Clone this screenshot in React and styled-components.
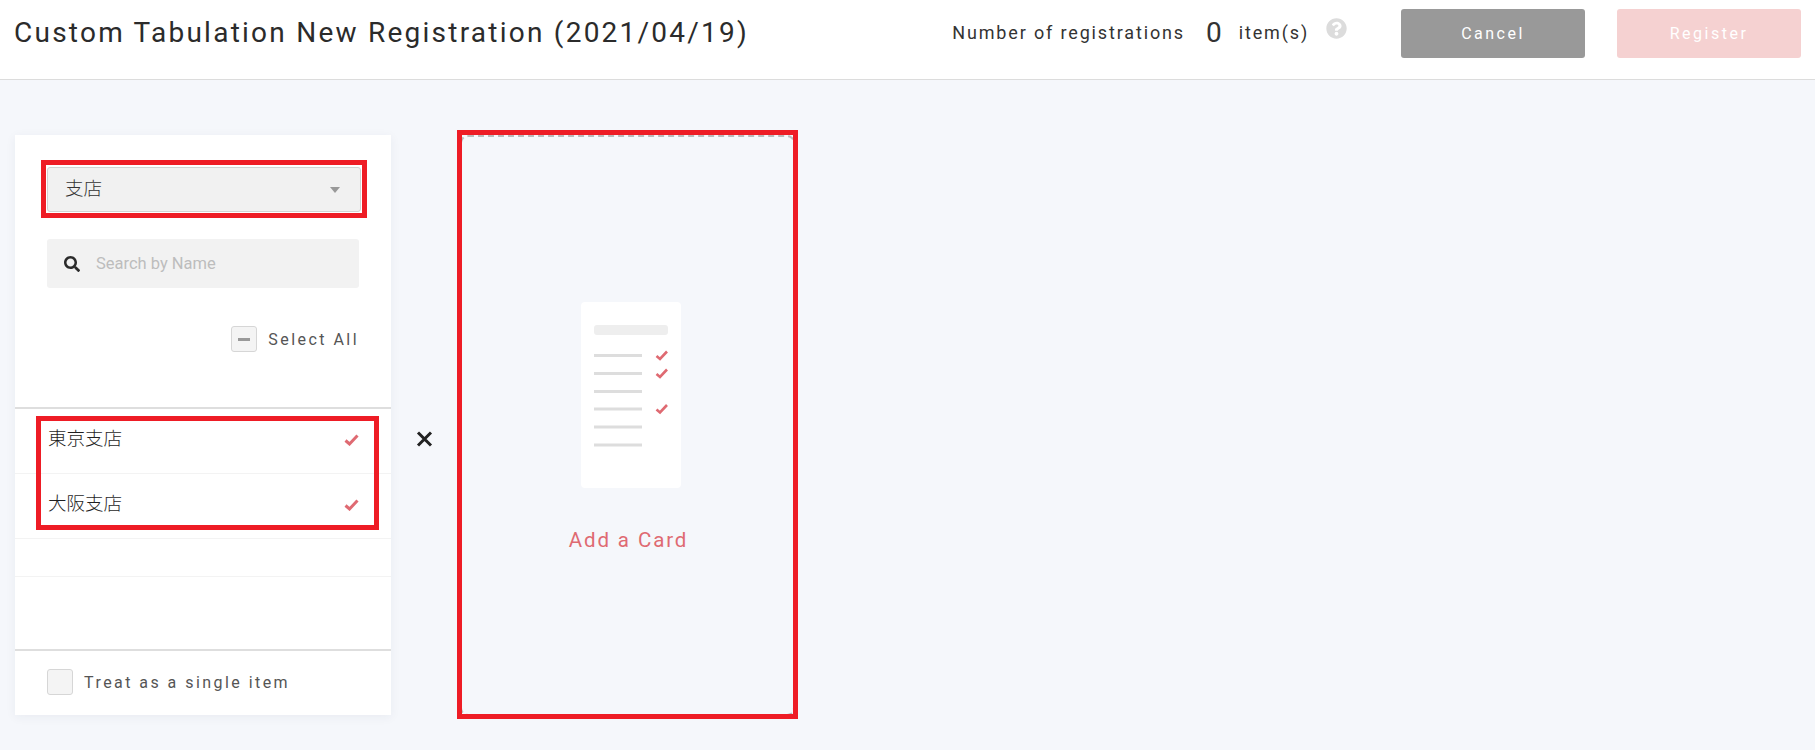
import React from 'react';
import styled, { createGlobalStyle } from 'styled-components';
import { FaSearch, FaQuestionCircle } from 'react-icons/fa';

const GlobalStyle = createGlobalStyle`
  html, body {
    margin: 0;
    padding: 0;
    background: #f5f7fb;
    font-family: Roboto, "Noto Sans CJK JP", sans-serif;
    color: #333;
  }
  * { box-sizing: border-box; }
`;

const Page = styled.div`
  width: 1815px;
  height: 750px;
  overflow: hidden;
`;

const Header = styled.header`
  height: 80px;
  padding: 9px 14px 21px;
  background: #fff;
  border-bottom: 1px solid #dcdcdc;
  display: flex;
  align-items: center;
`;

const Title = styled.h1`
  margin: -2px 0 0;
  flex: 1;
  font-size: 28px;
  font-weight: 400;
  letter-spacing: 2.24px;
  color: #2b2b2b;
  white-space: nowrap;
`;

const Count = styled.div`
  display: flex;
  align-items: center;
  margin-top: -2px;
  font-size: 18px;
  letter-spacing: 1.85px;
  color: #333;
`;

const CountNumber = styled.span`
  font-size: 28px;
  letter-spacing: 0;
  margin: 0 17px 0 21px;
`;

const HelpIcon = styled(FaQuestionCircle)`
  width: 21px;
  height: 21px;
  margin: -10px 54px 0 17px;
  color: #dcdcdc;
`;

const Button = styled.button`
  width: 184px;
  height: 49px;
  border: 0;
  border-radius: 3px;
  font-family: inherit;
  font-size: 16px;
  letter-spacing: 2.5px;
  color: #fff;
  background: ${p => (p.$disabled ? '#f5d1d1' : '#999')};
  margin-left: ${p => (p.$disabled ? '32px' : '0')};
`;

const Main = styled.main`
  display: flex;
  align-items: flex-start;
  padding: 55px 0 0 15px;
`;

const Card = styled.section`
  width: 376px;
  height: 580px;
  background: #fff;
  box-shadow: 0 2px 10px rgba(40, 50, 90, 0.06);
  display: flex;
  flex-direction: column;
`;

const Filters = styled.div`
  height: 274px;
  padding: 32px 0 0 32px;
  border-bottom: 2px solid #dedede;
`;

const Annotated = styled.div`
  position: relative;
  width: fit-content;
`;

const Highlight = styled.div`
  position: absolute;
  inset: ${p => p.$inset};
  border: 5px solid #ee1c25;
  pointer-events: none;
`;

const Select = styled.div`
  width: 314px;
  height: 45px;
  padding: 0 20px 0 17px;
  display: flex;
  align-items: center;
  justify-content: space-between;
  background: #f1f1f1;
  border: 1px solid #d2d2d2;
  border-radius: 3px;
  font-size: 18.5px;
  font-weight: 300;
  line-height: 40px;
  color: #333;
`;

const SelectText = styled.span`
  margin-top: -1px;
`;

const Caret = styled.span`
  width: 0;
  height: 0;
  border-left: 5px solid transparent;
  border-right: 5px solid transparent;
  border-top: 6px solid #999;
`;

const Search = styled.div`
  width: 312px;
  height: 49px;
  margin-top: 27px;
  padding-left: 17px;
  display: flex;
  align-items: center;
  gap: 16px;
  background: #f2f2f2;
  border-radius: 3px;
  font-size: 16.5px;
  color: #bdbdbd;
`;

const SearchIcon = styled(FaSearch)`
  width: 16px;
  height: 16px;
  color: #2b2b2b;
`;

const SelectAll = styled.div`
  width: 312px;
  margin-top: 38px;
  display: flex;
  justify-content: flex-end;
  align-items: center;
  gap: 11px;
`;

const Box = styled.span`
  width: 26px;
  height: 26px;
  display: flex;
  align-items: center;
  justify-content: center;
  background: #f4f4f4;
  border: 1px solid #d6d6d6;
  border-radius: 3px;
`;

const Dash = styled.span`
  width: 12px;
  height: 3px;
  background: #999;
`;

const Label = styled.span`
  font-size: 16px;
  letter-spacing: 2.45px;
  color: #555;
`;

const List = styled.div`
  flex: 1;
  min-height: 0;
  position: relative;
`;

const Row = styled.div`
  height: ${p => p.$height}px;
  padding: 19px 32px 0 33px;
  display: flex;
  justify-content: space-between;
  align-items: flex-start;
  border-bottom: 1px solid #f3f3f3;
  font-size: 18.5px;
  font-weight: 300;
  line-height: 22px;
  color: #1f1f1f;
`;

const CheckIcon = styled.svg`
  width: 15px;
  height: 12px;
  margin-top: 6px;
`;

const Footer = styled.div`
  height: 66px;
  padding: 0 0 2px 32px;
  display: flex;
  align-items: center;
  gap: 11px;
  border-top: 2px solid #dedede;
`;

const Times = styled.div`
  width: 69px;
  padding: 296px 3px 0 0;
  display: flex;
  justify-content: center;
`;

const DropZone = styled.div`
  width: 335px;
  height: 581px;
  display: flex;
  flex-direction: column;
  align-items: center;
  justify-content: center;
  border: 2px dashed #bbb;
  border-radius: 8px;
`;

const Paper = styled.svg`
  width: 100px;
  height: 186px;
  margin: 3px 0 0 6px;
  background: #fff;
  border-radius: 4px;
`;

const AddLabel = styled.div`
  margin: 40px 0 0 2px;
  font-size: 20.5px;
  line-height: 24px;
  letter-spacing: 1.9px;
  color: #df6a72;
`;

const rows = [
  { name: '東京支店', height: 65 },
  { name: '大阪支店', height: 65 },
  { name: '', height: 38 },
];

const paperLines = [
  { y: 52, checked: true },
  { y: 70, checked: true },
  { y: 88, checked: false },
  { y: 105.5, checked: true },
  { y: 123.5, checked: false },
  { y: 141.5, checked: false },
];

const Check = () => (
  <CheckIcon viewBox="0 0 15 12">
    <path d="M1.5 6.5 L5.5 10 L13.5 1.5" fill="none" stroke="#df6a72" strokeWidth="3" />
  </CheckIcon>
);

const App = () => {
  return (
    <Page>
      <GlobalStyle />
      <Header>
        <Title>Custom Tabulation New Registration (2021/04/19)</Title>
        <Count>
          Number of registrations
          <CountNumber>0</CountNumber>
          item(s)
        </Count>
        <HelpIcon />
        <Button>Cancel</Button>
        <Button $disabled>Register</Button>
      </Header>

      <Main>
        <Card>
          <Filters>
            <Annotated>
              <Select>
                <SelectText>支店</SelectText>
                <Caret />
              </Select>
              <Highlight $inset="-7px -6px -6px -6px" />
            </Annotated>
            <Search>
              <SearchIcon />
              Search by Name
            </Search>
            <SelectAll>
              <Box><Dash /></Box>
              <Label>Select All</Label>
            </SelectAll>
          </Filters>

          <List>
            {rows.map((row, i) => (
              <Row key={i} $height={row.height}>
                {row.name}
                {row.name && <Check />}
              </Row>
            ))}
            <Highlight $inset="7px 12px 119px 21px" />
          </List>

          <Footer>
            <Box />
            <Label>Treat as a single item</Label>
          </Footer>
        </Card>

        <Times>
          <svg width="17" height="16" viewBox="0 0 17 16">
            <path d="M2 1.5 L15 14.5 M15 1.5 L2 14.5" stroke="#222" strokeWidth="3" />
          </svg>
        </Times>

        <Annotated>
          <DropZone>
            <Paper viewBox="0 0 100 186">
              <rect x="13" y="23" width="74" height="10" rx="3" fill="#eee" />
              {paperLines.map(line => (
                <g key={line.y}>
                  <rect x="13" y={line.y} width="48" height="3" fill="#ddd" />
                  {line.checked && (
                    <path
                      d={`M75.5 ${line.y + 2} l3.5 3 l7 -7.5`}
                      fill="none"
                      stroke="#df6a72"
                      strokeWidth="2.6"
                    />
                  )}
                </g>
              ))}
            </Paper>
            <AddLabel>Add a Card</AddLabel>
          </DropZone>
          <Highlight $inset="-5px -3px -3px -3px" />
        </Annotated>
      </Main>
    </Page>
  );
};

export default App;
